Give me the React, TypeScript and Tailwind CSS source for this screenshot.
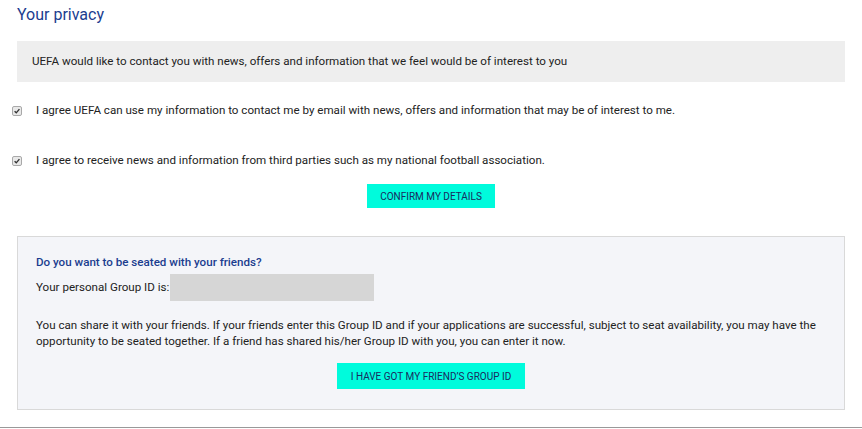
import React from 'react';

function Tick() {
  return (
    <span className="mt-[1px] flex h-[10px] w-[10px] shrink-0 items-center justify-center rounded-[2px] border border-[#a9a9a9] bg-[#e9e9e9]">
      <svg viewBox="0 0 10 10" className="h-[8px] w-[8px]">
        <path d="M2 5.2 L4.1 7.3 L8 2.6" fill="none" stroke="#333" strokeWidth="1.7" />
      </svg>
    </span>
  );
}

export default function App() {
  return (
    <div className="relative h-[429px] w-[862px] overflow-hidden bg-white font-['Roboto',sans-serif] text-[11.6px] text-[#222]">
      <h2 className="pl-[17px] pt-[5px] text-[16px] leading-[20px] text-[#1b3d8f]">Your privacy</h2>

      <div className="mx-[17px] mt-[16px] flex h-[41px] items-center bg-[#eeeeee] pl-[15px]">
        UEFA would like to contact you with news, offers and information that we feel would be of interest to you
      </div>

      <div className="mt-[20px] flex items-center gap-[14px] pl-[12px] leading-[16px]">
        <Tick />
        <span>I agree UEFA can use my information to contact me by email with news, offers and information that may be of interest to me.</span>
      </div>
      <div className="mt-[34px] flex items-center gap-[14px] pl-[12px] leading-[16px]">
        <Tick />
        <span>I agree to receive news and information from third parties such as my national football association.</span>
      </div>

      <div className="mt-[16px] flex justify-center">
        <button type="button" className="h-[24px] w-[128px] bg-[#00fbdc] text-[10px] uppercase text-[#1a2a5e]">
          Confirm my details
        </button>
      </div>

      <div className="mx-[17px] mt-[28px] h-[174px] border border-[#d9d9d9] bg-[#f4f5f9] px-[18px] pt-[17px]">
        <h3 className="font-medium leading-[16px] text-[#1b3d8f]">Do you want to be seated with your friends?</h3>
        <div className="mt-[4px] flex items-center">
          <span>Your personal Group ID is:</span>
          <span className="ml-[1px] h-[27px] w-[204px] bg-[#d6d6d6]" />
        </div>
        <div className="mt-[16px] flex flex-col leading-[16px]">
          <span className="whitespace-nowrap">
            You can share it with your friends. If your friends enter this Group ID and if your applications are successful, subject to seat availability, you may have the
          </span>
          <span>opportunity to be seated together. If a friend has shared his/her Group ID with you, you can enter it now.</span>
        </div>
        <div className="mt-[14px] flex justify-center">
          <button type="button" className="h-[26px] w-[188px] bg-[#00fbdc] text-[10px] uppercase text-[#1a2a5e]">
            I have got my friend’s Group ID
          </button>
        </div>
      </div>

      <div className="absolute bottom-[1px] left-0 h-px w-full bg-[#999]" />
    </div>
  );
}
